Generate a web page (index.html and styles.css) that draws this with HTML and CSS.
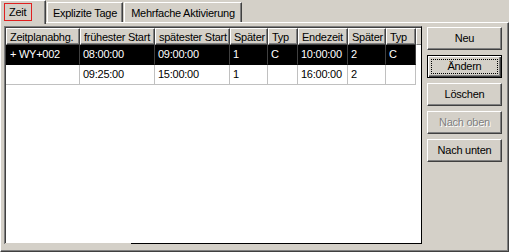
FILE: index.html
```html
<!DOCTYPE html>
<html>
<head>
<meta charset="utf-8">
<link rel="stylesheet" href="styles.css">
</head>
<body>
<div class="window">
  <div class="tabs">
    <div class="tab tab-active"><span class="focus">Zeit</span></div>
    <div class="tab tab-explizit">Explizite Tage</div>
    <div class="tab tab-mehrfach">Mehrfache Aktivierung</div>
  </div>
  <div class="panel">
    <div class="list">
      <div class="list-inner">
        <div class="thead">
          <div class="th c1">Zeitplanabhg.</div>
          <div class="th c2">frühester Start</div>
          <div class="th c3">spätester Start</div>
          <div class="th c4">Später</div>
          <div class="th c5">Typ</div>
          <div class="th c6">Endezeit</div>
          <div class="th c7">Später</div>
          <div class="th c8">Typ</div>
          <div class="th th-rest"></div>
        </div>
        <div class="row row-sel">
          <div class="td c1">+ WY+002</div>
          <div class="td c2">08:00:00</div>
          <div class="td c3">09:00:00</div>
          <div class="td c4">1</div>
          <div class="td c5">C</div>
          <div class="td c6">10:00:00</div>
          <div class="td c7">2</div>
          <div class="td c8">C</div>
        </div>
        <div class="row">
          <div class="td c1"></div>
          <div class="td c2">09:25:00</div>
          <div class="td c3">15:00:00</div>
          <div class="td c4">1</div>
          <div class="td c5"></div>
          <div class="td c6">16:00:00</div>
          <div class="td c7">2</div>
          <div class="td c8"></div>
        </div>
      </div>
      <div class="list-bottom"><div class="list-bottom-line"></div></div>
    </div>
    <div class="buttons">
      <div class="btn">Neu</div>
      <div class="btn btn-default"><span class="btn-focus">Ändern</span></div>
      <div class="btn">Löschen</div>
      <div class="btn btn-disabled">Nach oben</div>
      <div class="btn">Nach unten</div>
    </div>
  </div>
</div>
</body>
</html>
```
FILE: styles.css
```css
* { box-sizing: border-box; }
html, body { margin: 0; padding: 0; }
body {
  background: #d4d0c8;
  font-family: "Liberation Sans", Arial, sans-serif;
  font-size: 11px;
  letter-spacing: -0.25px;
  color: #000;
  overflow: hidden;
}
.window {
  width: 509px;
  height: 252px;
  display: flex;
  flex-direction: column;
}
.tabs {
  display: flex;
  align-items: flex-end;
  height: 22px;
}
.tab {
  height: 20px;
  margin-left: 1px;
  border: 1px solid;
  border-bottom: none;
  border-color: #fff #404040 transparent #fff;
  box-shadow: inset -1px 0 #808080;
  text-align: center;
  line-height: 16px;
  padding-top: 2px;
  white-space: nowrap;
}
.tab-explizit { width: 76px; }
.tab-mehrfach { width: 118px; }
.tab-active {
  position: relative;
  z-index: 1;
  margin-left: 0;
  width: 46px;
  height: 24px;
  margin-bottom: -2px;
  background: #d4d0c8;
  padding: 2px 0 0 3px;
  text-align: left;
}
.focus {
  display: block;
  width: 28px;
  height: 18px;
  border: 1px solid #e02020;
  padding-left: 4px;
  padding-top: 1px;
  line-height: 15px;
}
.panel {
  flex: 1;
  display: flex;
  gap: 5px;
  border: 1px solid;
  border-color: #fff #404040 #404040 #fff;
  box-shadow: inset -1px -1px #808080;
  padding: 3px 6px 7px 3px;
}
.list {
  width: 418px;
  display: flex;
  flex-direction: column;
  border-left: 1px solid #808080;
  border-top: 1px solid #808080;
  border-right: 1px solid #000;
}
.list-inner {
  flex: 1;
  background: #fff;
  border-left: 1px solid #404040;
  border-top: 1px solid #404040;
}
.list-bottom {
  height: 1px;
  display: flex;
}
.list-bottom-line {
  margin-left: 126px;
  flex: 1;
  background: #000;
}
.thead {
  display: flex;
  height: 17px;
}
.th {
  height: 17px;
  border: 1px solid;
  border-color: #fff #404040 #404040 #fff;
  box-shadow: inset -1px -1px #808080;
  background: #d4d0c8;
  padding: 1px 0 0 3px;
  line-height: 14px;
  white-space: nowrap;
  overflow: hidden;
}
.th-rest {
  width: 5px;
  border-right: none;
  border-bottom-color: #808080;
  box-shadow: none;
  padding: 0;
}
.c1 { width: 74px; }
.c2 { width: 75px; }
.c3 { width: 75px; }
.c4 { width: 38px; }
.c5 { width: 30px; }
.c6 { width: 50px; }
.c7 { width: 38px; }
.c8 { width: 30px; }
.row {
  display: flex;
  height: 20px;
}
.td {
  height: 20px;
  border-right: 1px solid #c0c0c0;
  border-bottom: 1px solid #c0c0c0;
  padding-left: 3px;
  line-height: 19px;
  white-space: nowrap;
  overflow: hidden;
}
.row-sel .td {
  background: #000;
  color: #fff;
  border-right-color: #404040;
  border-bottom-color: #000;
}
.row-sel .c1 { padding-left: 4px; }
.buttons {
  width: 75px;
  display: flex;
  flex-direction: column;
  gap: 5px;
  padding-top: 1px;
}
.btn {
  height: 23px;
  border: 1px solid;
  border-color: #fff #404040 #404040 #fff;
  box-shadow: inset -1px -1px #808080;
  text-align: center;
  line-height: 21px;
  white-space: nowrap;
}
.btn-default {
  border-color: #000;
  box-shadow: inset 1px 1px #fff, inset -1px -1px #404040, inset -2px -2px #808080;
  padding: 3px;
  line-height: 15px;
}
.btn-focus {
  display: block;
  height: 15px;
  border: 1px dotted #000;
  line-height: 13px;
}
.btn-disabled {
  color: #808080;
  text-shadow: 1px 1px 0 #fff;
}
```
